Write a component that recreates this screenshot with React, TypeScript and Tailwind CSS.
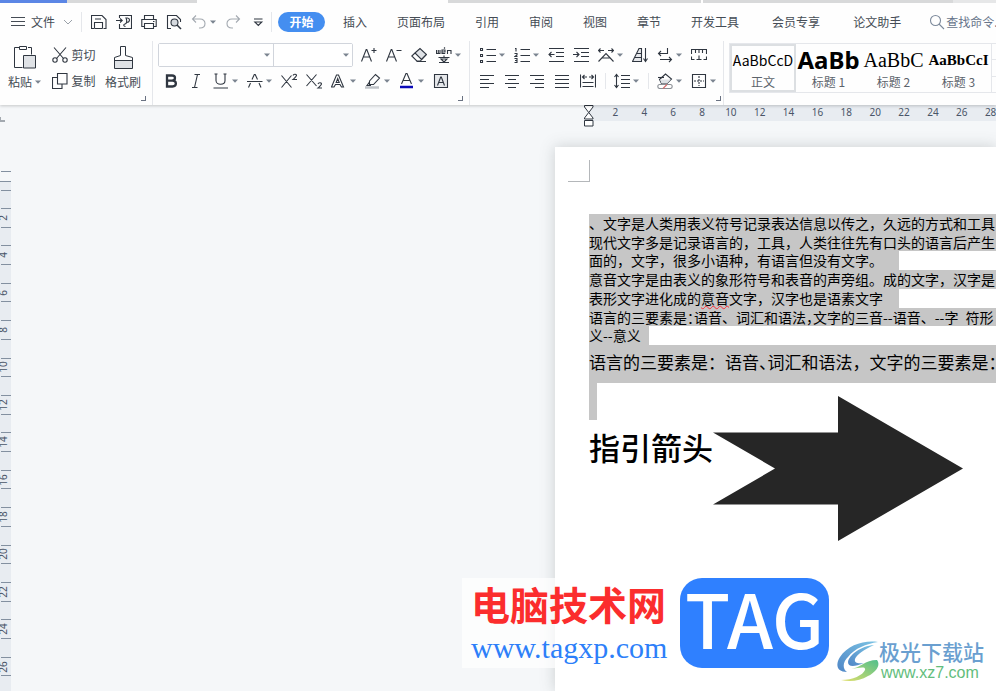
import React from 'react';

const CJK = "font-['Noto_Sans_CJK_SC',sans-serif]";

type IconProps = { children: React.ReactNode; className?: string };

const Icon: React.FC<IconProps> = ({ children, className = 'size-4' }) => (
  <svg viewBox="0 0 16 16" className={`${className} shrink-0`} fill="none" stroke="#2f3640" strokeWidth="1.1" aria-hidden="true">
    {children}
  </svg>
);

const Caret: React.FC = () => (
  <svg viewBox="0 0 6 4" className="h-1 w-1.5 shrink-0" fill="#7b8490" aria-hidden="true">
    <path d="M0 0.5h6L3 3.8z" />
  </svg>
);

type ToolProps = { label: string; drop?: boolean; children: React.ReactNode };

const Tool: React.FC<ToolProps> = ({ label, drop, children }) => (
  <button
    type="button"
    aria-label={label}
    className={drop ? 'flex h-5 w-[34px] shrink-0 items-center gap-[3px]' : 'flex h-5 w-[25px] shrink-0 items-center'}
  >
    <Icon>{children}</Icon>
    {drop && <Caret />}
  </button>
);

const Corner: React.FC<{ label: string }> = ({ label }) => (
  <button type="button" aria-label={label} className="mb-1 mr-1.5 size-[5px] self-end border-b border-r border-gray-500" />
);

const QuickAccess: React.FC = () => (
  <div className="flex h-5 shrink-0 items-center border-l border-gray-200 pl-[9px]">
    <Tool label="保存">
      <path d="M3 14.500H.500v-13h10.500l4 4v9h-2.500M3.500 14.500V8.500h8v6M3.500 14.500h8M4 5h6" />
    </Tool>
    <Tool label="输出为PDF">
      <path d="M3.500 4V1.500h12v13h-12V10M0 6.500h6M4 4.500l2.200 2-2.200 2" />
      <path d="M9.500 12.500c-2 0-2.500-2-.5-2.500 1.500-.3 2.500-3 1-6h1.500c3 .5 2.500 4.500-1 4.500" />
    </Tool>
    <Tool label="打印">
      <path d="M3.500 5V1.500h9V5M3 12.500H.8V5.500h14.400v7H13M3.500 9.500h9v5h-9zM12 7.500h1.500" />
    </Tool>
    <Tool label="打印预览">
      <path d="M5 14.500H1.500v-13h9l4 4V8" />
      <circle cx="8.500" cy="8.500" r="3.500" fill="#d5d9de" />
      <path d="M11 11l4 4" strokeWidth="1.6" />
    </Tool>
    <button type="button" aria-label="撤销" className="flex w-[34px] items-center gap-[3px]">
      <Icon>
        <path d="M5 1.500L1.500 5 5 8.500M1.500 5H9c3.300 0 5 2 5 4.500S12.300 14 9 14H8" stroke="#a3a9b0" />
      </Icon>
      <Caret />
    </button>
    <Tool label="恢复">
      <path d="M11 1.500L14.500 5 11 8.500M14.500 5H7C3.700 5 2 7 2 9.500S3.700 14 7 14h1" stroke="#a3a9b0" />
    </Tool>
    <button type="button" aria-label="自定义快速访问工具栏" className="flex w-[20px] items-center">
      <Icon>
        <path d="M4 5h8.500M4.800 8h7L8.300 11.500z" />
      </Icon>
    </button>
  </div>
);

const TabRow: React.FC = () => (
  <div className="flex h-[38px] items-center overflow-hidden text-xs text-[#454c55]">
    <button type="button" className="flex w-[81px] shrink-0 items-center pl-[11px]">
      <svg viewBox="0 0 14 12" className="h-3 w-3.5" stroke="#454c55" aria-hidden="true">
        <path d="M0 1.500h14M0 5.500h14M0 9.500h14" />
      </svg>
      <span className="ml-1.5">文件</span>
      <svg viewBox="0 0 10 6" className="ml-2 h-1.5 w-2.5" fill="none" stroke="#9aa1a9" aria-hidden="true">
        <path d="M1 1l4 4 4-4" />
      </svg>
    </button>
    <QuickAccess />
    <nav className="ml-px flex shrink-0 items-center border-l border-gray-200 pl-1.5">
      <button type="button" className="h-5 w-[47px] rounded-full bg-[#448ef0] font-bold text-white">开始</button>
      <div className="ml-[18px] flex gap-[30px]">
        {['插入', '页面布局', '引用', '审阅', '视图', '章节'].map((t) => (
          <button key={t} type="button">{t}</button>
        ))}
      </div>
      <div className="ml-[30px] flex gap-[33px]">
        {['开发工具', '会员专享', '论文助手'].map((t) => (
          <button key={t} type="button">{t}</button>
        ))}
      </div>
    </nav>
    <label className="ml-7 flex min-w-0 flex-1 items-center gap-px">
      <Icon>
        <circle cx="6.500" cy="6.500" r="5" stroke="#7d8a9c" />
        <path d="M10 10l5 5" stroke="#7d8a9c" />
      </Icon>
      <input
        type="text"
        aria-label="查找命令"
        placeholder="查找命令..."
        className="w-full min-w-0 bg-transparent outline-none placeholder:text-[#66748a]"
      />
    </label>
  </div>
);

const ClipboardGroup: React.FC = () => (
  <div className="flex w-[153px] shrink-0 border-r border-gray-200 pl-2 pt-1 text-xs text-[#454c55]">
    <button type="button" className="flex w-11 flex-col items-start">
      <svg viewBox="0 0 22 25" className="ml-1.5 h-[25px] w-[22px]" fill="none" stroke="#2f3640" aria-hidden="true">
        <path d="M5 2.500H.5v20h8M14 2.500h3.500v7M5.500 1.500h7v3h-7z" />
        <path d="M9.500 10.500h12v12.500h-12z" fill="#dfe2e6" />
      </svg>
      <span className="mt-1 flex items-center gap-[3px] leading-4">粘贴<Caret /></span>
    </button>
    <div className="flex w-[46px] flex-col gap-1.5">
      <button type="button" className="flex h-5 items-center gap-1 whitespace-nowrap">
        <Icon>
          <path d="M2 0.500l9.500 11M14 0.500L4.500 11.500" />
          <circle cx="3" cy="13" r="2.200" />
          <circle cx="13" cy="13" r="2.200" />
        </Icon>
        剪切
      </button>
      <button type="button" className="flex h-5 items-center gap-1 whitespace-nowrap">
        <Icon>
          <path d="M5.500.500h9.500v10.500H5.500zM5 4.500H.500v11h9.500V11.500" />
        </Icon>
        复制
      </button>
    </div>
    <button type="button" className="ml-2 flex w-9 flex-col items-center whitespace-nowrap">
      <svg viewBox="0 0 19 25" className="h-[25px] w-[19px]" fill="none" stroke="#2f3640" aria-hidden="true">
        <path d="M.500 15.500h18v8h-18z" fill="#dfe2e6" />
        <path d="M.500 16v-3.500l6-2V1.500h5v9l7 2V16" />
      </svg>
      <span className="mt-1 leading-4">格式刷</span>
    </button>
    <div className="flex flex-1 justify-end">
      <Corner label="剪贴板设置" />
    </div>
  </div>
);

const Combo: React.FC<{ label: string; className: string }> = ({ label, className }) => (
  <div className={`relative flex items-center ${className}`}>
    <select aria-label={label} className="h-full w-full appearance-none bg-white outline-none" />
    <span className="pointer-events-none absolute right-[3px] flex">
      <Caret />
    </span>
  </div>
);

const FontGroup: React.FC = () => (
  <div className="flex w-[317px] shrink-0 border-r border-gray-200 pl-[5px] pt-0.5">
    <div className="flex w-[300px] shrink-0 flex-col gap-1">
      <div className="flex h-6 items-center">
        <div className="flex h-6 w-[195px] shrink-0 rounded-xs border border-gray-300">
          <Combo label="字体" className="w-[115px] border-r border-gray-300" />
          <Combo label="字号" className="flex-1" />
        </div>
        <div className="ml-2 flex">
          <Tool label="增大字号">
            <path d="M.500 14.500L5.200 2.500h.600l4.700 12M2.300 10h6.500M10.500 3.500h5M13 1v5" />
          </Tool>
          <Tool label="减小字号">
            <path d="M.500 14.500L5.200 2.500h.600l4.700 12M2.300 10h6.500M10.500 3.500h5" />
          </Tool>
          <Tool label="清除格式">
            <path d="M4.500 5.500L9 1.500l6.500 6-5 5-6-6z" fill="#dfe2e6" />
            <path d="M4.500 5.500L.800 9l5 5h3.500l6-6.500M5.500 14.500H15" />
          </Tool>
          <Tool label="拼音指南" drop>
            <path d="M.500 3v3.500h3.500V3M2.300 3v3.500M6 5h3V3H6v3.500h3.200M8 1.500l1-1M11.500 7V3.500H15V7" />
            <path d="M2.500 10.500h11M8 8.500v2M5 12h6L7.500 15.500M4.500 11.500l4 4M3 15.500h10" />
          </Tool>
        </div>
      </div>
      <div className="flex pl-[5px]">
        <Tool label="加粗">
          <path d="M4 2.500h5c4 0 4 5.200 0 5.200H4zM4 7.700h5.500c4.500 0 4.500 5.800 0 5.800H4z" strokeWidth="2.300" />
        </Tool>
        <Tool label="倾斜">
          <path d="M6.500 1.500h5.500M4 14.500h5.500M9.500 1.500l-3 13" />
        </Tool>
        <Tool label="下划线" drop>
          <path d="M1.500 1h3M10.500 1h3M3 1v6.500c0 5 9 5 9 0V1M.500 15h14.500" />
        </Tool>
        <Tool label="删除线" drop>
          <path d="M5 6.500L7.300 1.500h.900L10.500 6.500M0 8.500h15.500M3.500 10l-2 4.500M12 10l2 4.500" />
        </Tool>
        <Tool label="上标">
          <path d="M.500 2.500l10 12M10.500 2.500l-10 12M12 2.500c.5-1.800 3.500-1.500 3.500 0 0 1-1 1.800-3.500 4h4" />
        </Tool>
        <Tool label="下标">
          <path d="M.500 1.500l10 11.500M10.500 1.500l-10 11.500M12 11c.5-1.800 3.500-1.500 3.500 0 0 1-1 1.800-3.500 4h4" />
        </Tool>
        <Tool label="文字效果" drop>
          <path d="M.500 14L5.500 2h2l5 12h-2L9 11.500H4.500L3 14zM5.200 9.500h3L6.700 5.500z" />
        </Tool>
        <Tool label="突出显示" drop>
          <path d="M4.500 8l6-6.500 4 3.500-6 6.500H4.500zM4.500 9L2 12.500h4" />
          <path d="M0 14.500h14" stroke="#bfc3c8" strokeWidth="2.500" />
        </Tool>
        <Tool label="字体颜色" drop>
          <path d="M2.500 11L7 .500h1L12.500 11M4 7.500h7" />
          <path d="M1 14h13" stroke="#0a0ab8" strokeWidth="2.500" />
        </Tool>
        <Tool label="字符底纹">
          <path d="M1.500 1.500h13v13h-13z" fill="#e6e8eb" />
          <path d="M4.500 12.500L7.700 4h.6l3.200 8.500M5.500 9.500h5" />
        </Tool>
      </div>
    </div>
    <div className="flex flex-1 justify-end">
      <Corner label="字体设置" />
    </div>
  </div>
);

const Split: React.FC = () => <span className="mr-2 h-4 w-px shrink-0 self-center bg-gray-200" />;

const ParagraphGroup: React.FC = () => (
  <div className="flex w-[254px] shrink-0 border-r border-gray-200 pl-2.5 pt-1">
    <div className="flex w-[236px] shrink-0 flex-col gap-1.5">
      <div className="flex">
        <Tool label="项目符号" drop>
          <path d="M6.500 2.500H16M6.500 8.500H16M6.500 14.500H16" />
          <path d="M.500 1.500h2v2h-2zM.500 7.500h2v2h-2zM.500 13.500h2v2h-2z" />
        </Tool>
        <Tool label="编号" drop>
          <path d="M6.500 2.500H16M6.500 8.500H16M6.500 14.500H16" />
          <path d="M1 1.500h1V4.500M.500 6.500h2.500v1.500l-2 1.500h2.500M.500 11.500h2.500v4H.500M1 13.500h2" />
        </Tool>
        <Tool label="减少缩进量">
          <path d="M1 1.500h15M8 5.500h8M8 9.500h8M1 14.500h15M1 7.500h5.500M3.500 5L1 7.500 3.500 10" />
        </Tool>
        <Tool label="增加缩进量">
          <path d="M1 1.500h15M8 5.500h8M8 9.500h8M1 14.500h15M0 7.500h5.500M3.500 5L6 7.500 3.500 10" />
        </Tool>
        <Tool label="中文版式" drop>
          <path d="M.500 14.500L8 6.500l7.500 8M4 11h8M.500 3.500h5.500M2.500 1.500l-2 2 2 2M10 3.500h5.500M13.500 1.500l2 2-2 2" />
        </Tool>
        <Tool label="排序">
          <path d="M.500 14.500L7 1.500h2.500v13zM5 6.500h4.500M3 10.500h6.500" fill="#e6e8eb" />
          <path d="M13.500 1v13M11.500 11.500l2 3 2-3" />
        </Tool>
        <Tool label="显示段落标记" drop>
          <path d="M10.500 1v5.500H1.500M4 4L1.500 6.500 4 9M3 12.500h11.500M12 10l2.500 2.500L12 15" />
        </Tool>
        <Tool label="制表位">
          <path d="M.500 7V2.500h15V7M4.500 3v3M8 3v3M11.500 3v3M.500 9.500v3h3M15.500 9.500v3h-3M8 8.500v4M5.500 12.500h5" />
        </Tool>
      </div>
      <div className="flex">
        <Tool label="左对齐">
          <path d="M0 2.500h14M0 6.500h9M0 10.500h14M0 14.500h9" />
        </Tool>
        <Tool label="居中对齐">
          <path d="M0 2.500h14M3 6.500h8M0 10.500h14M3 14.500h8" />
        </Tool>
        <Tool label="右对齐">
          <path d="M0 2.500h14M5 6.500h9M0 10.500h14M5 14.500h9" />
        </Tool>
        <Tool label="两端对齐">
          <path d="M0 2.500h14M0 6.500h14M0 10.500h14M0 14.500h14" />
        </Tool>
        <Tool label="分散对齐">
          <path d="M.500 1.500v13M15.500 1.500v13M2.500 9.500h11M2.500 13.500h11M2.500 4h4.500M4.500 2l-2 2 2 2M9 4h4.500M11.500 2l2 2-2 2" />
        </Tool>
        <Split />
        <Tool label="行距" drop>
          <path d="M2.500 1.500v13M.500 4l2-2.500 2 2.500M.500 12l2 2.500 2-2.500M7 2.500h9M7 6.500h9M7 10.500h9M7 14.500h9" />
        </Tool>
        <Split />
        <Tool label="底纹颜色" drop>
          <path d="M2.500 6.500L8.500 1l6 5-4.500 4.500H4.500z" fill="#fff" />
          <path d="M3 6.500h11l-4 4H4.500z" fill="#dfe2e6" stroke="none" />
          <path d="M1 4.500h6" />
          <rect x=".800" y="11.500" width="14.400" height="4" rx="2" fill="#fff" stroke="#8b8f95" />
          <path d="M6 15.500l4-4" stroke="#d46a6a" />
        </Tool>
        <Tool label="边框" drop>
          <path d="M1.500 1.500h13v13h-13z" />
          <path d="M8 3v10M3 8h10" strokeDasharray="2 1" />
        </Tool>
      </div>
    </div>
    <div className="flex flex-1 justify-end">
      <Corner label="段落设置" />
    </div>
  </div>
);

const styles = [
  { name: '正文', sample: 'AaBbCcD', face: "font-['Noto_Sans_CJK_SC',sans-serif] text-sm" },
  { name: '标题 1', sample: 'AaBb', face: "font-['Noto_Sans',sans-serif] font-bold text-[24px]" },
  { name: '标题 2', sample: 'AaBbC', face: "font-['Liberation_Serif',serif] text-[20px]" },
  { name: '标题 3', sample: 'AaBbCcI', face: "font-['Liberation_Serif',serif] font-bold text-[15px]" },
];

const StyleGallery: React.FC = () => (
  <div className="ml-[5px] mt-0.5 flex h-[50px] min-w-0 flex-1 overflow-hidden border-y border-l border-gray-200">
    {styles.map((s, i) => (
      <button
        key={s.name}
        type="button"
        className={
          i === 0
            ? 'flex w-[66px] shrink-0 flex-col items-center border-2 border-[#dcdfe2]'
            : 'flex w-[65px] shrink-0 flex-col items-center py-0.5'
        }
      >
        <span className={`flex h-7 items-center whitespace-nowrap text-black ${s.face}`}>{s.sample}</span>
        <span className="text-xs leading-4 text-[#5c636b]">{s.name}</span>
      </button>
    ))}
    <div className="flex w-6 shrink-0 flex-col border-l border-gray-200">
      <button type="button" aria-label="上一行" className="flex-1 border-b border-gray-200" />
      <button type="button" aria-label="下一行" className="flex-1 border-b border-gray-200" />
      <button type="button" aria-label="更多样式" className="flex-1" />
    </div>
  </div>
);

const evens = (n: number) => Array.from({ length: n }, (_, i) => (i + 1) * 2);

const TopRuler: React.FC = () => (
  <div className="flex h-4 shrink-0">
    <span className="mt-3 size-[5px] shrink-0 border-b-2 border-l border-[#a3a9b0]" />
    <div className="relative ml-[583px] flex-1 bg-[#e8ecf1] pl-[13px]">
      <svg viewBox="0 0 10 22" className="absolute -left-1 top-0 h-[22px] w-2.5" fill="#fff" stroke="#2f3640" aria-hidden="true">
        <path d="M.500.500h8.500v1.500l-4.200 5.500 4.200 5.500v1H.500v-1l4.200-5.500L.500 2zM.500 15.500h8.500v5.500H.500z" />
      </svg>
      <div className="flex w-[404px] text-center font-['Noto_Sans',sans-serif] text-[10px] leading-[15px] text-[#4a5568]">
        {evens(14).map((n) => (
          <span key={n} className="min-w-0 flex-1">{n}</span>
        ))}
      </div>
    </div>
  </div>
);

const SideRuler: React.FC = () => (
  <div className="w-[11px] shrink-0 pt-[50px]">
    <div className="ml-px h-2.5 border-t border-[#8390a0]" />
    <div className="h-[9px] border-t border-[#8390a0] bg-[#e8ecf1]" />
    <div className="bg-[#e8ecf1] pl-px">
      <div className="h-[18px] border-t border-[#8390a0]" />
      <div className="flex h-[487px] flex-col border-t border-[#8390a0] font-['Noto_Sans',sans-serif] text-[10px] leading-none text-[#4a5568]">
        {evens(13).map((n) => (
          <div key={n} className="flex min-h-0 flex-1 flex-col">
            <div className="flex min-h-0 w-1 flex-1 items-center justify-center">
              <span className="-rotate-90">{n}</span>
            </div>
            <div className="min-h-0 flex-1 border-b border-t border-[#8390a0]" />
          </div>
        ))}
      </div>
    </div>
  </div>
);

const Half: React.FC<{ children: string }> = ({ children }) => (
  <span className="[font-feature-settings:'halt']">{children}</span>
);

const DocumentPage: React.FC = () => (
  <article className="mt-[26px] min-w-0 flex-1 bg-white text-black shadow-[0_0_14px_rgba(80,90,90,0.25)]">
    <div className="ml-[13px] h-[35px] w-[22px] pt-[13px]">
      <div className="h-[22px] border-b border-r border-[#b4b7ba]" />
    </div>
    <div className="ml-[34px] mt-8 overflow-hidden whitespace-nowrap">
      <div lang="zh-CN" className="grid h-[131px] grid-rows-7 text-sm leading-[18px] *:bg-[#c6c6c6]">
        <p>、文字是人类用表义符号记录表达信息以传之，久远的方式和工具</p>
        <p>现代文字多是记录语言的，工具，人类往往先有口头的语言后产生</p>
        <p className="w-fit pr-4">面的，文字，很多小语种，有语言但没有文字。</p>
        <p>意音文字是由表义的象形符号和表音的声旁组。成的文字，汉字是</p>
        <p className="relative z-10 w-fit pr-4">
          表形文字进化成的
          <span className="underline decoration-red-500 decoration-wavy decoration-1 underline-offset-1">意音</span>
          文字，汉字也是语素文字
        </p>
        <p>语言的三要素是<Half>：</Half>语音、词汇和语法<Half>，</Half>文字的三音--语音、--字&ensp;符形</p>
        <p className="w-fit pr-2">义--意义</p>
      </div>
      <p lang="zh-CN" className="h-[38px] bg-[#c6c6c6] text-[17px] leading-[34px]">
        语言的三要素是：语音<Half>、</Half>词汇和语法，文字的三要素是<Half>：</Half>
      </p>
      <div className="flex">
        <div className="w-[124px] shrink-0">
          <div className="h-[37px] w-2 bg-[#c6c6c6]" />
          <h1 className="mt-1 text-[31px] font-medium leading-[46px]">指引箭头</h1>
        </div>
        <svg viewBox="0 0 250 145" className="mt-[13px] h-[145px] w-[250px] shrink-0" fill="#262626" role="img" aria-label="箭头">
          <path d="M125 0l125 72.500L125 145v-36.500H0l62-36L0 36.500h125z" />
        </svg>
      </div>
    </div>
  </article>
);

const Watermarks: React.FC = () => (
  <div className="pointer-events-none absolute bottom-0 right-0 flex w-[534px] items-end pb-2">
    <div className="mb-[15px] flex h-[90px] w-[206px] shrink-0 flex-col whitespace-nowrap bg-white/70 pl-[9px]">
      <p className="text-[39px] font-bold leading-[50px] text-[#fb2d2d]">电脑技术网</p>
      <a href="#tagxp" className="font-['Liberation_Serif',serif] text-[30px] leading-10 text-[#2d7ff9]">www.tagxp.com</a>
    </div>
    <div className="mb-[15px] ml-3 flex h-[90px] w-[149px] shrink-0 items-center justify-center rounded-[22px] bg-[#2f80ff] pb-3 text-[74px] font-medium leading-none text-white">
      TAG
    </div>
    <svg viewBox="0 0 42 42" className="ml-2 h-[42px] w-[42px] shrink-0" aria-hidden="true">
      <defs>
        <linearGradient id="swirlBlue" x1="0" y1="1" x2="1" y2="0">
          <stop offset="0" stopColor="#4f86c6" />
          <stop offset="1" stopColor="#7cc4e4" />
        </linearGradient>
        <linearGradient id="swirlGreen" x1="0" y1="1" x2="1" y2="0">
          <stop offset="0" stopColor="#e3e06a" />
          <stop offset="1" stopColor="#4fbf8c" />
        </linearGradient>
      </defs>
      <path d="M41 1C27-1 11 4 3 16c-5 8-3 15 7 15-5-4-4-10 1-15C18 7 29 3 41 1z" fill="url(#swirlBlue)" />
      <path d="M37 4C24 5 12 14 11 21c0 5 6 5 16 1-6 1-10 0-9-4 2-5 9-9 19-14z" fill="url(#swirlBlue)" />
      <path d="M14 28c9-1 14-9 26-9 4 5-1 12-9 16-8 5-18 6-27 4 12 0 22-5 24-10 1-4-6-2-14-1z" fill="url(#swirlGreen)" />
    </svg>
    <div className="flex flex-col whitespace-nowrap">
      <p className="text-[21px] font-medium leading-6 text-[#6a9fd0]">极光下载站</p>
      <a href="#xz7" className="pl-0.5 font-['Liberation_Sans',sans-serif] text-[16px] leading-5 text-[#62bd7c]">www.xz7.com</a>
    </div>
  </div>
);

const App: React.FC = () => (
  <div className={`relative flex h-screen flex-col overflow-hidden bg-[#f5f7f9] ${CJK}`}>
    <header className="z-10 shrink-0 bg-[#fefefe] shadow-[0_1px_3px_rgba(0,0,0,0.2)]">
      <div className="flex h-[3px]">
        <span className="w-[67px] bg-[#5b86e5]" />
        <span className="w-[130px] bg-[#d8d9da]" />
        <span className="w-[251px]" />
        <span className="w-[253px] bg-[#d8d9da]" />
        <span className="ml-0.5 w-[250px] bg-[#d8d9da]" />
        <span className="flex-1 bg-[#e6e7e8]" />
      </div>
      <TabRow />
      <div className="flex h-16">
        <ClipboardGroup />
        <FontGroup />
        <ParagraphGroup />
        <StyleGallery />
      </div>
    </header>
    <TopRuler />
    <main className="flex min-h-0 flex-1 overflow-hidden">
      <SideRuler />
      <div className="w-[544px] shrink-0" />
      <DocumentPage />
    </main>
    <Watermarks />
  </div>
);

export default App;
